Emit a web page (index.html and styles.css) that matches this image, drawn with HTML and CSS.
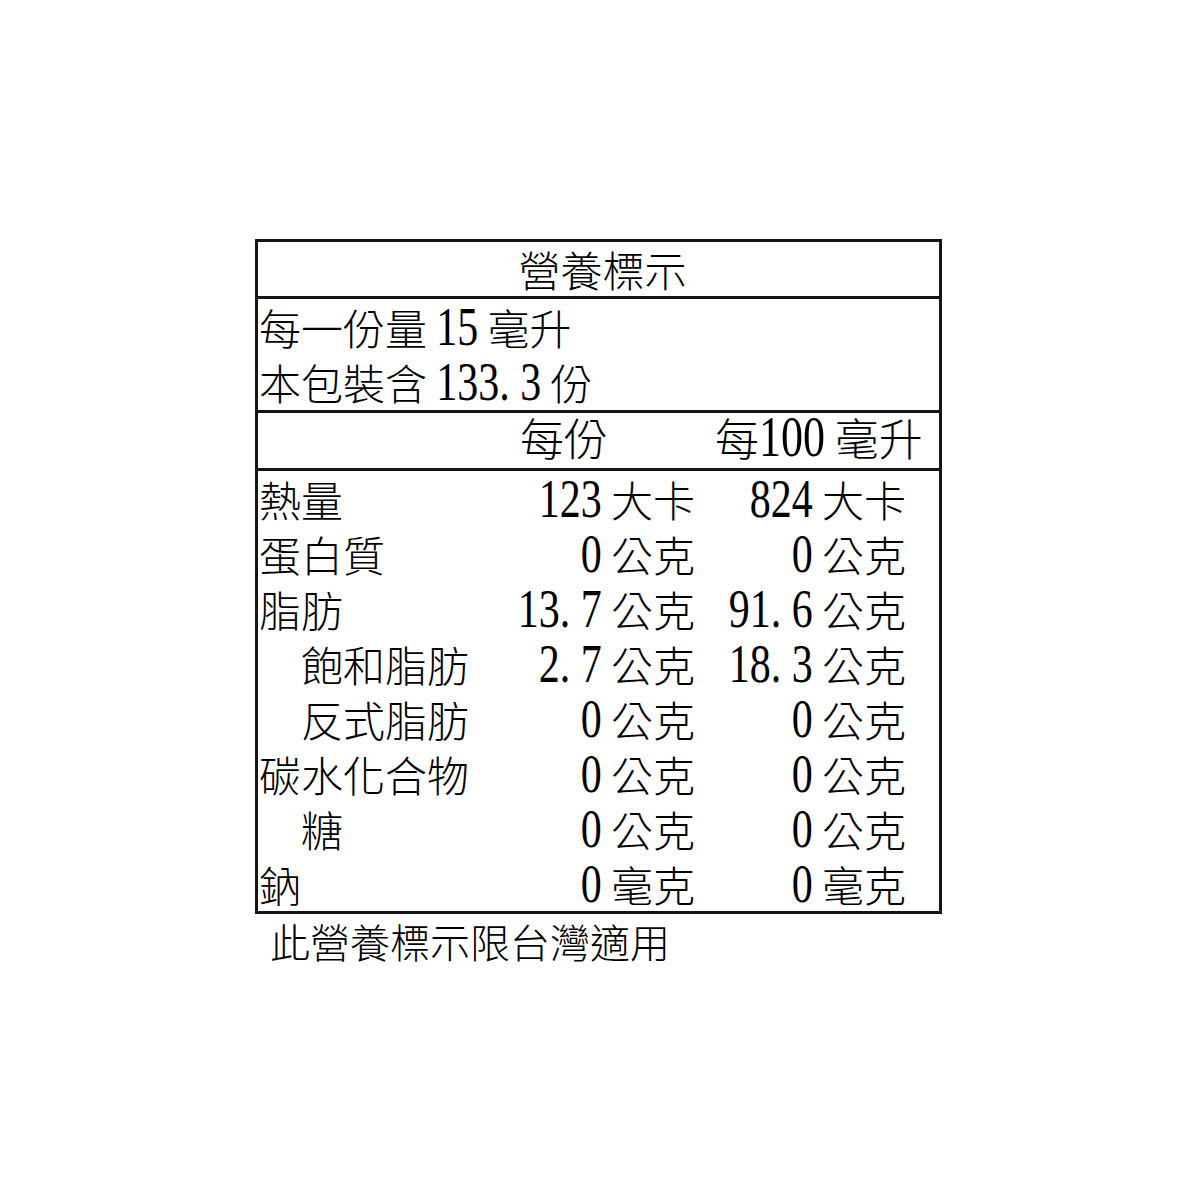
FILE: index.html
```html
<!DOCTYPE html>
<html lang="zh-Hant">
<head>
<meta charset="utf-8">
<title>營養標示</title>
<link rel="stylesheet" href="styles.css">
</head>
<body>
<div class="page">
  <div class="label">
    <div class="title">營養標示</div>
    <div class="serving">
      <div class="line">每一份量 <span class="n">15</span> 毫升</div>
      <div class="line">本包裝含 <span class="n">133<span class="pt">.</span>3</span> 份</div>
    </div>
    <div class="head">
      <span class="h1">每份</span>
      <span class="h2">每<span class="n">100</span> 毫升</span>
    </div>
    <div class="body">
      <div class="row"><span class="name">熱量</span><span class="v"><span class="n">123</span> 大卡</span><span class="v"><span class="n">824</span> 大卡</span></div>
      <div class="row"><span class="name">蛋白質</span><span class="v"><span class="n">0</span> 公克</span><span class="v"><span class="n">0</span> 公克</span></div>
      <div class="row"><span class="name">脂肪</span><span class="v"><span class="n">13<span class="pt">.</span>7</span> 公克</span><span class="v"><span class="n">91<span class="pt">.</span>6</span> 公克</span></div>
      <div class="row"><span class="name sub">飽和脂肪</span><span class="v"><span class="n">2<span class="pt">.</span>7</span> 公克</span><span class="v"><span class="n">18<span class="pt">.</span>3</span> 公克</span></div>
      <div class="row"><span class="name sub">反式脂肪</span><span class="v"><span class="n">0</span> 公克</span><span class="v"><span class="n">0</span> 公克</span></div>
      <div class="row"><span class="name">碳水化合物</span><span class="v"><span class="n">0</span> 公克</span><span class="v"><span class="n">0</span> 公克</span></div>
      <div class="row"><span class="name sub">糖</span><span class="v"><span class="n">0</span> 公克</span><span class="v"><span class="n">0</span> 公克</span></div>
      <div class="row"><span class="name">鈉</span><span class="v"><span class="n">0</span> 毫克</span><span class="v"><span class="n">0</span> 毫克</span></div>
    </div>
  </div>
  <div class="note">此營養標示限台灣適用</div>
</div>
</body>
</html>
```
FILE: styles.css
```css
html, body {
  margin: 0;
  padding: 0;
  background: #ffffff;
}

body {
  font-family: "Noto Sans CJK TC", "Noto Sans CJK SC", sans-serif;
  font-size: 42px;
  font-weight: 300;
  color: #000000;
}

.page {
  padding: 239px 0 0 255px;
}

.label {
  width: 687px;
  box-sizing: border-box;
  border: 3px solid #151515;
}

.title {
  height: 54px;
  line-height: 54px;
  text-align: center;
  padding-left: 8px;
  border-bottom: 3px solid #151515;
}

.serving {
  height: 110px;
  padding: 0 0 1px 1px;
  border-bottom: 3px solid #151515;
}

.line {
  height: 55px;
  line-height: 55px;
  white-space: nowrap;
}

.head {
  height: 55px;
  line-height: 49px;
  font-size: 44px;
  display: grid;
  grid-template-columns: 262px 195px auto;
  border-bottom: 3px solid #151515;
  white-space: nowrap;
}

.h1 {
  grid-column: 2;
}

.h2 {
  grid-column: 3;
}

.head .n {
  font-size: 44px;
  transform-origin: 50% 37px;
}

.body {
  display: flex;
  flex-direction: column;
}

.row {
  height: 55px;
  line-height: 55px;
  display: grid;
  grid-template-columns: 1fr 215px 211px;
  padding: 0 33px 0 1px;
  white-space: nowrap;
}

.name.sub {
  padding-left: 42px;
}

.v {
  text-align: right;
}

.n {
  display: inline-block;
  font-family: "Liberation Serif", "Times New Roman", serif;
  font-weight: 400;
  font-size: 42px;
  line-height: 1;
  transform: scaleY(1.29);
  transform-origin: 50% 35px;
}

.pt {
  display: inline-block;
  width: 21px;
  text-align: left;
}

.note {
  margin-left: 15px;
  font-size: 40px;
  line-height: 55px;
}
```
